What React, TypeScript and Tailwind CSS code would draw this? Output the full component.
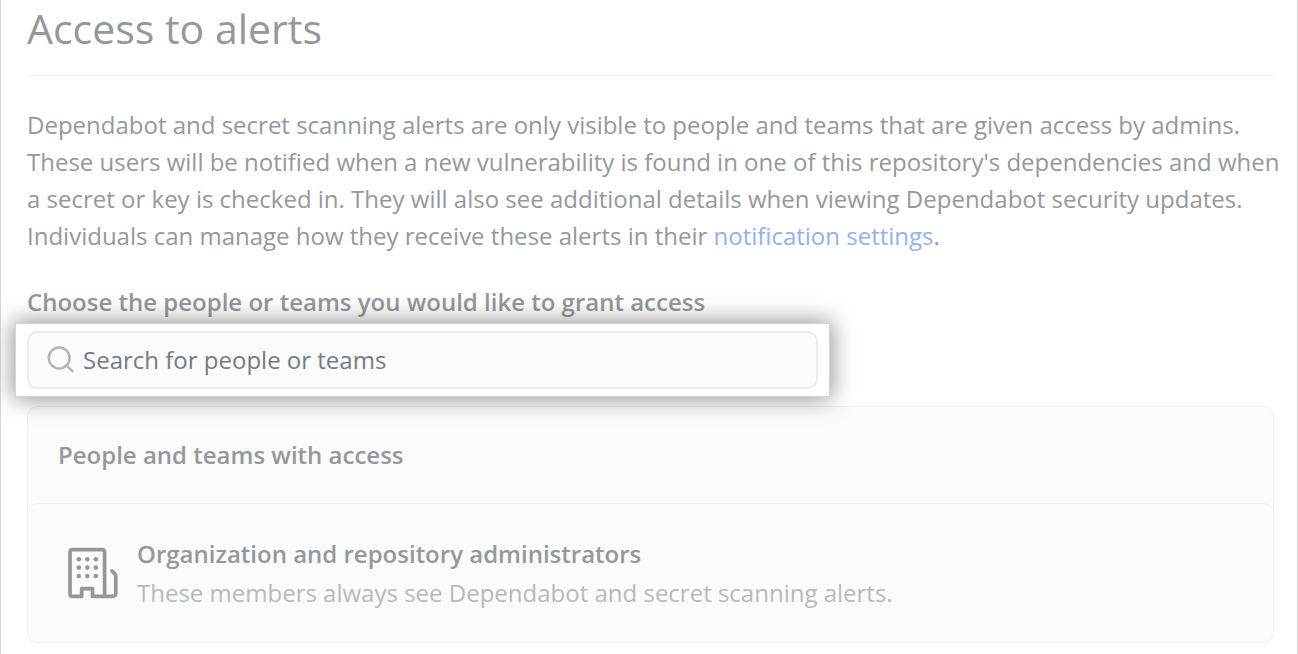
function SearchIcon() {
  return (
    <svg
      className="h-7 w-7 shrink-0"
      viewBox="0 0 28 28"
      fill="none"
      stroke="#b5b5b5"
      strokeWidth="2.5"
      aria-hidden="true"
    >
      <circle cx="12.2" cy="12" r="10.4" />
      <path d="M19.3 19.2 25.4 25.2" strokeLinecap="round" />
    </svg>
  );
}

function OrganizationIcon() {
  const steps = [0, 1, 2];
  return (
    <svg
      className="h-[52px] w-[52px] shrink-0"
      viewBox="0 0 52 52"
      fill="none"
      stroke="#959698"
      strokeWidth="3.7"
      strokeLinejoin="round"
      aria-hidden="true"
    >
      <path
        d="M37.6 49.4V4.9a2.2 2.2 0 0 0-2.2-2.2H5.2A2.2 2.2 0 0 0 3 4.9v42.3a2.2 2.2 0 0 0 2.2 2.2h9.5v-7.8h10.8v7.8h20.3a3 3 0 0 0 3-3V29.5a5 5 0 0 0-1.6-3.4l-2.3-2.2"
        strokeLinecap="round"
      />
      {steps.map((row) =>
        steps.map((col) => (
          <circle
            key={`${row}-${col}`}
            cx={11.8 + col * 8.5}
            cy={12.2 + row * 8.4}
            r="2.3"
            fill="#959698"
            stroke="none"
          />
        )),
      )}
    </svg>
  );
}

export default function App() {
  return (
    <main className="min-h-screen border-x border-[#d8d8d8] bg-white pr-[23px] pb-3 pl-[26px] font-['Open_Sans','Noto_Sans',sans-serif] text-2xl text-[#95989b]">
      <h1 className="border-b border-[#f1f1f2] pt-[7px] pb-[25px] text-[41px] leading-[43px] text-[#94989b]">
        Access to alerts
      </h1>

      <p className="-mr-5 pt-[30px] leading-[37px]">
        Dependabot and secret scanning alerts are only visible to people and teams that are given access by admins.
        <br />
        These users will be notified when a new vulnerability is found in one of this repository's dependencies and when
        <br />
        a secret or key is checked in. They will also see additional details when viewing Dependabot security updates.
        <br />
        Individuals can manage how they receive these alerts in their{" "}
        <a href="#notifications" className="text-[#92b2ea]">
          notification settings
        </a>
        .
      </p>

      <label htmlFor="grantee" className="mt-[26px] block leading-[43px] font-semibold">
        Choose the people or teams you would like to grant access
      </label>

      <div className="relative -ml-3 w-[815px] max-w-full border border-[#d4d4d4] bg-white px-[11px] py-[7px] shadow-[0_0_22px_2px_rgba(0,0,0,0.42)]">
        <div className="flex h-[58px] items-center gap-2 rounded-[10px] border-2 border-[#e8ebef] bg-[#fafbfd] pr-4 pl-[18px]">
          <SearchIcon />
          <input
            id="grantee"
            type="text"
            placeholder="Search for people or teams"
            className="min-w-0 flex-1 bg-transparent text-[#6a737d] outline-none placeholder:text-[#747b84]"
          />
        </div>
      </div>

      <section className="mt-[9px] rounded-[10px] border border-[#f0f1f3] bg-[#fafbfd]">
        <h2 className="px-[30px] py-[30px] leading-9 font-semibold">People and teams with access</h2>
        <div className="flex items-center gap-[18px] rounded-[10px] border-t border-[#f0f1f3] px-[39px] py-[30px]">
          <OrganizationIcon />
          <div className="leading-[39px]">
            <h3 className="font-semibold">Organization and repository administrators</h3>
            <p className="text-[#b6b9be]">These members always see Dependabot and secret scanning alerts.</p>
          </div>
        </div>
      </section>
    </main>
  );
}
